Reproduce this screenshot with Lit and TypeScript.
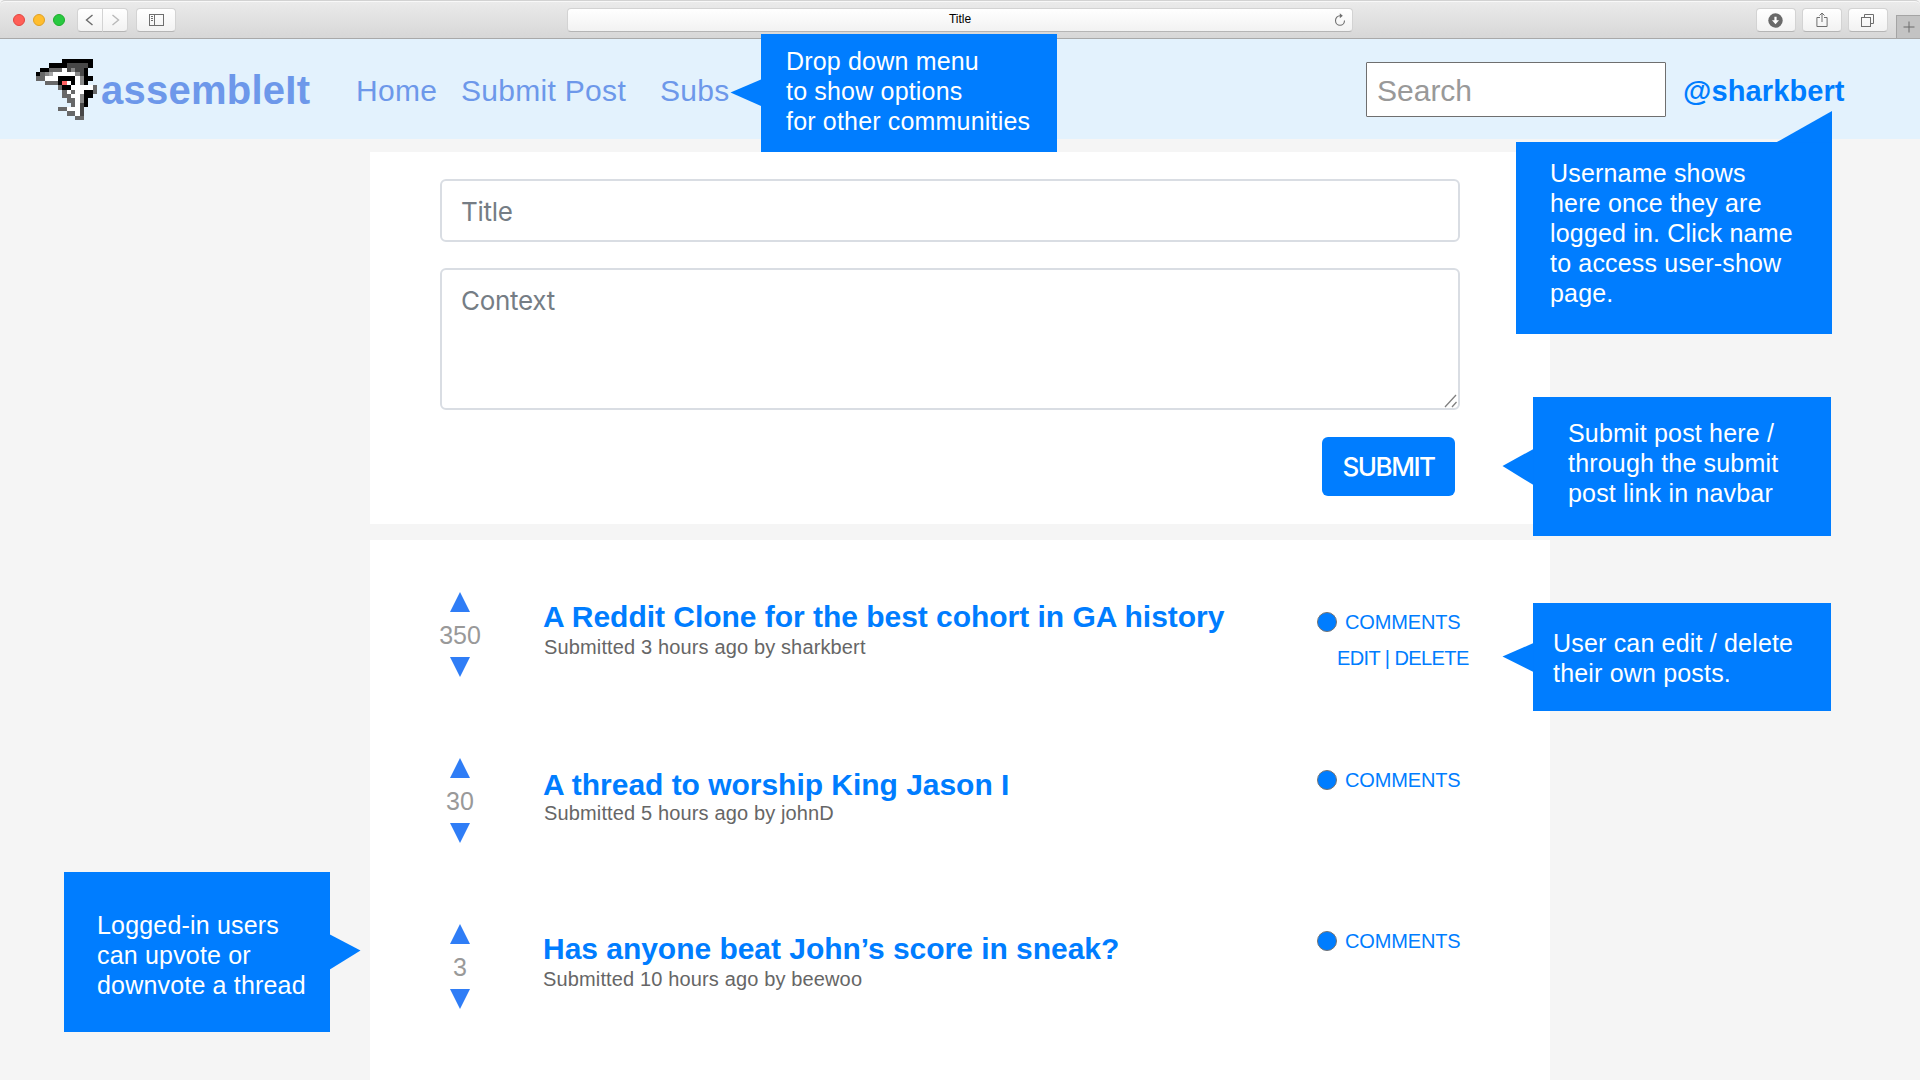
import { LitElement, html, svg, css } from "lit";
import { customElement, property } from "lit/decorators.js";
import { classMap } from "lit/directives/class-map.js";

const SHARK = [
  "......kkkkkkk.",
  "...kkkkdddddk.",
  ".kkgggwdmddk..",
  "kgmlwwwwwmdk..",
  "ggwwwkkkkwmkk.",
  "..gggkrwkwmk..",
  ".....gkkwwwwwg",
  "......gwgwwkkg",
  "......ggwwmkk.",
  ".......ggwmk..",
  "........gwdk..",
  ".....ggwwwd...",
  ".......ggwd...",
  ".........gg...",
];

const SHARK_COLORS: Record<string, string> = {
  k: "#000000",
  d: "#484848",
  g: "#686868",
  m: "#888888",
  l: "#a6a6a6",
  w: "#ffffff",
  r: "#ff6262",
};

@customElement("shark-logo")
class SharkLogo extends LitElement {
  static styles = css`
    :host { display: block; width: 61px; height: 61px; }
    svg { display: block; }
  `;
  render() {
    return html`<svg width="61" height="61" viewBox="0 0 14 14" shape-rendering="crispEdges">
      ${SHARK.flatMap((row, y) =>
        [...row].map((c, x) =>
          c === "." ? null : svg`<rect x=${x} y=${y} width="1" height="1" fill=${SHARK_COLORS[c]}></rect>`
        )
      )}
    </svg>`;
  }
}

@customElement("browser-bar")
class BrowserBar extends LitElement {
  static styles = css`
    :host {
      display: flex; align-items: flex-start; box-sizing: border-box; height: 39px; flex: none;
      background: linear-gradient(#ebebeb, #d7d7d7);
      border-top: 1px solid #d2d2d2; border-bottom: 1px solid #a9a9a9;
      border-radius: 5px 5px 0 0; box-shadow: inset 0 1px 0 #f8f8f8;
      padding: 7px 0 0 13px;
    }
    .lights { display: flex; gap: 8px; padding-top: 6px; margin-right: 12px; }
    .light { width: 12px; height: 12px; border-radius: 50%; box-sizing: border-box; }
    .close { background: #ff5f57; border: 1px solid #e24640; }
    .min { background: #ffbd2e; border: 1px solid #dfa023; }
    .max { background: #28c940; border: 1px solid #1dad2b; }
    .btn {
      display: flex; align-items: center; justify-content: center; box-sizing: border-box; height: 24px;
      background: linear-gradient(#ffffff, #f2f2f2); border: 1px solid #d3d3d3;
      border-bottom-color: #b5b5b5; border-radius: 4px;
    }
    .btn svg { display: block; }
    .back { width: 26px; border-radius: 4px 0 0 4px; padding-right: 2px; }
    .fwd { width: 26px; border-radius: 0 4px 4px 0; margin-left: -1px; }
    .side { width: 40px; margin-left: 8px; }
    .url { position: relative; width: 786px; margin-left: 391px; font: 12px "Liberation Sans", Arial, sans-serif; color: #000; padding-bottom: 2px; }
    .reload { position: absolute; right: 5px; top: 3px; }
    .right { display: flex; gap: 6px; margin-left: auto; margin-right: 8px; }
    .right .btn { width: 40px; padding-right: 1px; }
    .plus {
      display: flex; align-items: center; justify-content: center; width: 24px; height: 23px; margin-top: 7px;
      box-sizing: border-box; background: #c3c3c3; border-left: 1px solid #a4a4a4; border-top: 1px solid #a4a4a4;
    }
  `;
  render() {
    return html`
      <div class="lights">
        <div class="light close"></div><div class="light min"></div><div class="light max"></div>
      </div>
      <div class="btn back"><svg width="9" height="12" viewBox="0 0 9 12"><path d="M7.5 1L1.5 6L7.5 11" fill="none" stroke="#6a6a6a" stroke-width="1.4"/></svg></div>
      <div class="btn fwd"><svg width="9" height="12" viewBox="0 0 9 12"><path d="M1.5 1L7.5 6L1.5 11" fill="none" stroke="#b9b9b9" stroke-width="1.4"/></svg></div>
      <div class="btn side"><svg width="15" height="12" viewBox="0 0 15 12" fill="none" stroke="#6e6e6e"><rect x=".5" y=".5" width="14" height="11"/><path d="M5.5 0V12M2 2.5H4M2 4.5H4M2 6.5H4"/></svg></div>
      <div class="btn url">Title
        <svg class="reload" width="14" height="16" viewBox="0 0 14 16"><path d="M8.2 3.7H7A4.5 4.8 0 1 0 11.5 8.5" fill="none" stroke="#6e6e6e" stroke-width="1.1"/><path d="M6.8 1.2L9.8 3.7L6.8 6.2Z" fill="#6e6e6e"/></svg>
      </div>
      <div class="right">
        <div class="btn"><svg width="15" height="15" viewBox="0 0 15 15"><circle cx="7.5" cy="7.5" r="7.2" fill="#696969"/><path d="M6.4 3.7H8.6V7.3H11L7.5 11.3L4 7.3H6.4Z" fill="#fff"/></svg></div>
        <div class="btn"><svg width="12" height="16" viewBox="0 0 12 16" fill="none" stroke="#6e6e6e"><path d="M4 5.5H.9V14.5H11.1V5.5H8M6 10V1M3.5 3.5L6 1L8.5 3.5"/></svg></div>
        <div class="btn"><svg width="13" height="13" viewBox="0 0 13 13" fill="none" stroke="#6e6e6e"><rect x=".5" y="3.5" width="9" height="9"/><path d="M3.5 3V.5H12.5V9.5H10"/></svg></div>
      </div>
      <div class="plus"><svg width="12" height="12" viewBox="0 0 12 12"><path d="M6 .5V11.5M.5 6H11.5" stroke="#6b6b6b"/></svg></div>
    `;
  }
}

@customElement("note-callout")
class NoteCallout extends LitElement {
  static styles = css`
    :host {
      position: absolute; box-sizing: border-box; background: #007dff; color: #fff;
      font: 25px/30px "Liberation Sans", Arial, sans-serif; letter-spacing: 0.18px; white-space: nowrap;
    }
    .pointer { position: absolute; left: 0; top: 0; width: 1px; height: 1px; overflow: visible; fill: #007dff; }
    .line { display: block; }
  `;
  @property({ attribute: false }) lines: string[] = [];
  @property({ attribute: false }) points = "";
  render() {
    return html`<svg class="pointer"><polygon points=${this.points}></polygon></svg>
      ${this.lines.map((l) => html`<span class="line">${l}</span>`)}`;
  }
}

interface Post {
  votes: number;
  title: string;
  meta: string;
  own?: boolean;
  cls: string;
}

const POSTS: Post[] = [
  { votes: 350, title: "A Reddit Clone for the best cohort in GA history", meta: "Submitted 3 hours ago by sharkbert", own: true, cls: "first" },
  { votes: 30, title: "A thread to worship King Jason I", meta: "Submitted 5 hours ago by johnD", cls: "second" },
  { votes: 3, title: "Has anyone beat John’s score in sneak?", meta: "Submitted 10 hours ago by beewoo", cls: "third" },
];

@customElement("post-row")
class PostRow extends LitElement {
  static styles = css`
    :host { display: block; height: 166px; font-family: "Liberation Sans", Arial, sans-serif; }
    .row { display: grid; grid-template-columns: 60px 773px 1fr; padding-left: 60px; align-items: start; }
    .votes { display: flex; flex-direction: column; align-items: center; }
    .votes svg { display: block; fill: #2f7df6; }
    .count { height: 45px; font-size: 25px; line-height: 46px; color: #999; }
    .body { padding-left: 53px; white-space: nowrap; }
    .title { margin: 0; padding-top: 8px; height: 41px; box-sizing: border-box; font-size: 30px; line-height: 34px; font-weight: 700; letter-spacing: -0.03px; color: #007dff; }
    .second .title { padding-top: 10px; }
    .meta { font-size: 20px; line-height: 28px; color: #666; padding-left: 1px; letter-spacing: 0.14px; }
    .third .meta { padding-left: 0; }
    .actions { padding: 18px 0 0 54px; color: #007dff; font-size: 20px; line-height: 24px; white-space: nowrap; }
    .second .actions { padding-top: 10px; }
    .third .actions { padding-top: 5px; }
    .comments { display: flex; align-items: center; gap: 8px; letter-spacing: -0.15px; }
    .dot { width: 20px; height: 20px; box-sizing: border-box; border-radius: 50%; background: #007dff; border: 1px solid #737373; }
    .edit { padding: 12px 0 0 20px; letter-spacing: -0.58px; }
  `;
  @property({ attribute: false }) post!: Post;
  render() {
    const p = this.post;
    return html`<div class=${classMap({ row: true, [p.cls]: true })}>
      <div class="votes">
        <svg width="20" height="20"><polygon points="10,0 20,20 0,20"/></svg>
        <span class="count">${p.votes}</span>
        <svg width="20" height="20"><polygon points="0,0 20,0 10,20"/></svg>
      </div>
      <div class="body">
        <h2 class="title">${p.title}</h2>
        <div class="meta">${p.meta}</div>
      </div>
      <div class="actions">
        <div class="comments"><span class="dot"></span><span>COMMENTS</span></div>
        ${p.own ? html`<div class="edit">EDIT | DELETE</div>` : null}
      </div>
    </div>`;
  }
}

@customElement("app-root")
class AppRoot extends LitElement {
  static styles = css`
    :host { display: block; font-family: "Liberation Sans", Arial, sans-serif; }
    .page { position: relative; display: flex; flex-direction: column; width: 1920px; height: 1080px; overflow: hidden; background: #f5f5f5; }
    .nav { display: flex; align-items: flex-start; box-sizing: border-box; height: 100px; flex: none; background: #e3f2fd; padding-left: 36px; white-space: nowrap; }
    .shark { margin-top: 20px; }
    .brand { margin: 28px 0 0 4px; width: 255px; font-size: 40px; line-height: 46px; font-weight: 700; letter-spacing: 0.25px; color: #6d98ea; }
    .link { margin-top: 34px; font-size: 30px; line-height: 36px; letter-spacing: 0.3px; color: #6d98ea; }
    .home { width: 105px; }
    .submit-post { width: 199px; }
    .search { box-sizing: border-box; width: 300px; height: 55px; margin: 23px 17px 0 auto; padding: 10px 0 0 10px; background: #fff; border: 1px solid #6f6f6f; border-radius: 1px; font-size: 30px; line-height: 36px; color: #999; }
    .user { margin-top: 34px; width: 237px; font-size: 29px; line-height: 36px; font-weight: 700; letter-spacing: 0.12px; color: #007dff; }
    .panel { width: 1180px; margin-left: 370px; box-sizing: border-box; background: #fff; flex: none; }
    .form { height: 372px; margin-top: 13px; padding: 27px 90px 0 70px; display: flex; flex-direction: column; font-family: Inter, Roboto, sans-serif; }
    .field { position: relative; box-sizing: border-box; border: 2px solid #d9dde3; border-radius: 6px; padding: 13px 0 0 19px; font-size: 26px; line-height: 36px; letter-spacing: -0.3px; color: #757d85; }
    .title-field { height: 63px; }
    .text-field { height: 142px; margin-top: 26px; }
    .grip { position: absolute; right: 0; bottom: 0; }
    .submit { align-self: flex-end; margin: 27px 5px 0 0; width: 133px; height: 59px; border-radius: 6px; background: #007dff; color: #fff; font-size: 26px; line-height: 60px; font-weight: 500; text-align: center; letter-spacing: -1.5px; }
    .list { margin-top: 16px; height: 540px; padding-top: 52px; }
    .n1 { left: 761px; top: 34px; width: 296px; height: 118px; padding: 12px 0 0 25px; }
    .n2 { left: 1516px; top: 142px; width: 316px; height: 192px; padding: 16px 0 0 34px; }
    .n3 { left: 1533px; top: 397px; width: 298px; height: 139px; padding: 21px 0 0 35px; }
    .n4 { left: 1533px; top: 603px; width: 298px; height: 108px; padding: 25px 0 0 20px; }
    .n5 { left: 64px; top: 872px; width: 265.5px; height: 159.5px; padding: 38px 0 0 33px; }
  `;
  render() {
    return html`<div class="page">
      <browser-bar></browser-bar>
      <nav class="nav">
        <shark-logo class="shark"></shark-logo>
        <span class="brand">assembleIt</span>
        <span class="link home">Home</span>
        <span class="link submit-post">Submit Post</span>
        <span class="link">Subs</span>
        <div class="search">Search</div>
        <span class="user">@sharkbert</span>
      </nav>
      <section class="panel form">
        <div class="field title-field">Title</div>
        <div class="field text-field">Context
          <svg class="grip" width="14" height="14" viewBox="0 0 14 14"><path d="M1 13L12 1M8 13L12.5 8" stroke="#808080" stroke-width="1.3" fill="none"/></svg>
        </div>
        <div class="submit">SUBMIT</div>
      </section>
      <section class="panel list">${POSTS.map((p) => html`<post-row .post=${p}></post-row>`)}</section>
      <note-callout class="n1" .points=${"0,45.5 -30.5,58.5 0,72"} .lines=${["Drop down menu", "to show options", "for other communities"]}></note-callout>
      <note-callout class="n2" .points=${"260,0.5 316,-31 316,0.5"} .lines=${["Username shows", "here once they are", "logged in. Click name", "to access user-show", "page."]}></note-callout>
      <note-callout class="n3" .points=${"0.5,52 -30.5,69 0.5,88"} .lines=${["Submit post here /", "through the submit", "post link in navbar"]}></note-callout>
      <note-callout class="n4" .points=${"0.5,40 -30.5,53.5 0.5,69"} .lines=${["User can edit / delete", "their own posts."]}></note-callout>
      <note-callout class="n5" .points=${"265,62 296.5,78.5 265,98"} .lines=${["Logged-in users", "can upvote or", "downvote a thread"]}></note-callout>
    </div>`;
  }
}
